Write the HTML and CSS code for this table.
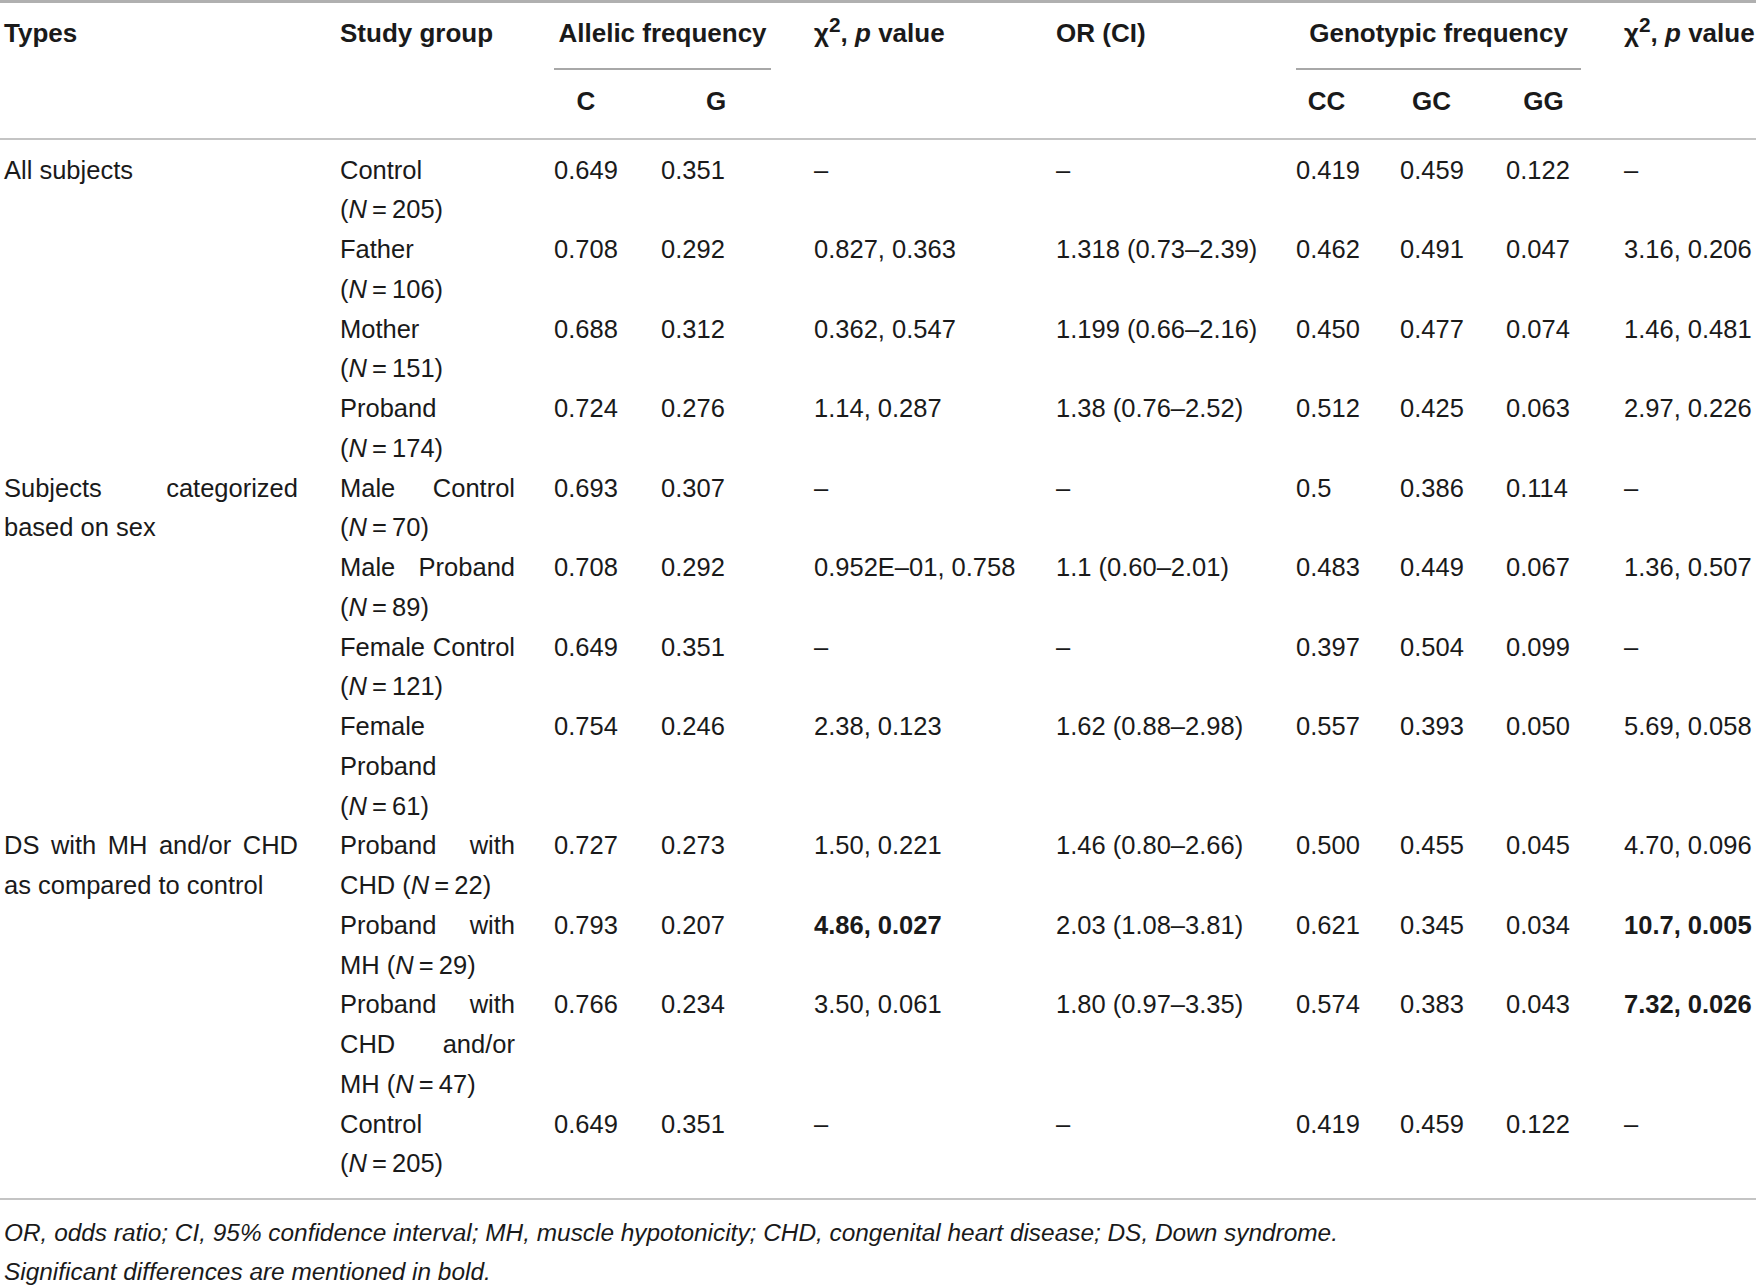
FILE: index.html
```html
<!DOCTYPE html>
<html>
<head>
<meta charset="utf-8">
<link rel="stylesheet" href="styles.css">
</head>
<body>
<div class="wrap">
<table class="tbl">
  <colgroup>
    <col class="c1"><col class="c2"><col class="c3"><col class="c4"><col class="c5"><col class="c6"><col class="c7"><col class="c8"><col class="c9"><col class="c10">
  </colgroup>
  <thead>
    <tr class="h1">
      <th rowspan="2" class="first">Types</th>
      <th rowspan="2">Study group</th>
      <th colspan="2" class="span"><div class="spanline">Allelic frequency</div></th>
      <th rowspan="2">χ<sup>2</sup>, <i>p</i> value</th>
      <th rowspan="2">OR (CI)</th>
      <th colspan="3" class="span"><div class="spanline">Genotypic frequency</div></th>
      <th rowspan="2">χ<sup>2</sup>, <i>p</i> value</th>
    </tr>
    <tr class="h2">
      <th class="ctr">C</th>
      <th class="ctr">G</th>
      <th class="ctr">CC</th>
      <th class="ctr">GC</th>
      <th class="ctr">GG</th>
    </tr>
  </thead>
  <tbody>
    <tr class="r-first">
      <td class="first" rowspan="4">All subjects</td>
      <td class="sg">Control <span class="n">(<i>N</i>&#8239;=&#8239;205)</span></td>
      <td>0.649</td><td>0.351</td><td>–</td><td>–</td><td>0.419</td><td>0.459</td><td>0.122</td><td>–</td>
    </tr>
    <tr>
      <td class="sg">Father <span class="n">(<i>N</i>&#8239;=&#8239;106)</span></td>
      <td>0.708</td><td>0.292</td><td>0.827, 0.363</td><td>1.318 (0.73–2.39)</td><td>0.462</td><td>0.491</td><td>0.047</td><td>3.16, 0.206</td>
    </tr>
    <tr>
      <td class="sg">Mother <span class="n">(<i>N</i>&#8239;=&#8239;151)</span></td>
      <td>0.688</td><td>0.312</td><td>0.362, 0.547</td><td>1.199 (0.66–2.16)</td><td>0.450</td><td>0.477</td><td>0.074</td><td>1.46, 0.481</td>
    </tr>
    <tr>
      <td class="sg">Proband <span class="n">(<i>N</i>&#8239;=&#8239;174)</span></td>
      <td>0.724</td><td>0.276</td><td>1.14, 0.287</td><td>1.38 (0.76–2.52)</td><td>0.512</td><td>0.425</td><td>0.063</td><td>2.97, 0.226</td>
    </tr>
    <tr>
      <td class="first" rowspan="4">Subjects categorized based on sex</td>
      <td class="sg">Male Control <span class="n">(<i>N</i>&#8239;=&#8239;70)</span></td>
      <td>0.693</td><td>0.307</td><td>–</td><td>–</td><td>0.5</td><td>0.386</td><td>0.114</td><td>–</td>
    </tr>
    <tr>
      <td class="sg">Male Proband <span class="n">(<i>N</i>&#8239;=&#8239;89)</span></td>
      <td>0.708</td><td>0.292</td><td>0.952E–01, 0.758</td><td>1.1 (0.60–2.01)</td><td>0.483</td><td>0.449</td><td>0.067</td><td>1.36, 0.507</td>
    </tr>
    <tr>
      <td class="sg">Female Control <span class="n">(<i>N</i>&#8239;=&#8239;121)</span></td>
      <td>0.649</td><td>0.351</td><td>–</td><td>–</td><td>0.397</td><td>0.504</td><td>0.099</td><td>–</td>
    </tr>
    <tr>
      <td class="sg">Female Proband <span class="n">(<i>N</i>&#8239;=&#8239;61)</span></td>
      <td>0.754</td><td>0.246</td><td>2.38, 0.123</td><td>1.62 (0.88–2.98)</td><td>0.557</td><td>0.393</td><td>0.050</td><td>5.69, 0.058</td>
    </tr>
    <tr>
      <td class="first" rowspan="4">DS with MH and/or CHD as compared to control</td>
      <td class="sg">Proband with CHD <span class="n">(<i>N</i>&#8239;=&#8239;22)</span></td>
      <td>0.727</td><td>0.273</td><td>1.50, 0.221</td><td>1.46 (0.80–2.66)</td><td>0.500</td><td>0.455</td><td>0.045</td><td>4.70, 0.096</td>
    </tr>
    <tr>
      <td class="sg">Proband with MH <span class="n">(<i>N</i>&#8239;=&#8239;29)</span></td>
      <td>0.793</td><td>0.207</td><td><b>4.86, 0.027</b></td><td>2.03 (1.08–3.81)</td><td>0.621</td><td>0.345</td><td>0.034</td><td><b>10.7, 0.005</b></td>
    </tr>
    <tr>
      <td class="sg">Proband with CHD and/or MH <span class="n">(<i>N</i>&#8239;=&#8239;47)</span></td>
      <td>0.766</td><td>0.234</td><td>3.50, 0.061</td><td>1.80 (0.97–3.35)</td><td>0.574</td><td>0.383</td><td>0.043</td><td><b>7.32, 0.026</b></td>
    </tr>
    <tr class="r-last">
      <td class="sg">Control <span class="n">(<i>N</i>&#8239;=&#8239;205)</span></td>
      <td>0.649</td><td>0.351</td><td>–</td><td>–</td><td>0.419</td><td>0.459</td><td>0.122</td><td>–</td>
    </tr>
  </tbody>
</table>
<div class="notes">
  <p>OR, odds ratio; CI, 95% confidence interval; MH, muscle hypotonicity; CHD, congenital heart disease; DS, Down syndrome.</p>
  <p>Significant differences are mentioned in bold.</p>
</div>
</div>
</body>
</html>
```
FILE: styles.css
```css
html, body {
  margin: 0;
  padding: 0;
  background: #fff;
  overflow: hidden;
}

.wrap {
  width: 1756px;
  overflow: hidden;
  font-family: "Liberation Sans", Arial, sans-serif;
  font-size: 25.5px;
  line-height: 39.75px;
  color: #1a1a1a;
}

.tbl {
  border-collapse: collapse;
  table-layout: fixed;
  width: 1820px;
}

.c1 { width: 340px; }
.c2 { width: 214px; }
.c3 { width: 107px; }
.c4 { width: 153px; }
.c5 { width: 242px; }
.c6 { width: 240px; }
.c7 { width: 104px; }
.c8 { width: 106px; }
.c9 { width: 118px; }
.c10 { width: 196px; }

.tbl th,
.tbl td {
  padding: 0 39px 0 0;
  text-align: left;
  vertical-align: top;
}

.tbl th {
  padding-right: 43px;
  font-size: 26px;
  font-weight: bold;
  white-space: nowrap;
}

.tbl td {
  white-space: nowrap;
}

.tbl td.sg,
.tbl td.first {
  white-space: normal;
  text-align: justify;
}

.tbl td.first {
  padding-right: 42px;
}

.tbl .first {
  padding-left: 4px;
}

.n {
  white-space: nowrap;
}

.tbl th sup {
  font-size: 0.8em;
  line-height: 0;
  vertical-align: 0.5em;
}

.tbl thead {
  border-top: 3px solid #b0b0b0;
  border-bottom: 2px solid #c4c4c4;
}

.tbl thead tr.h1 th {
  padding-top: 11px;
}

.spanline {
  text-align: center;
  padding-bottom: 14px;
  border-bottom: 2px solid #a8a8a8;
}

.tbl thead tr.h2 th {
  padding-top: 12px;
  padding-bottom: 16px;
}

.tbl th.ctr {
  text-align: center;
}

.tbl tbody {
  border-bottom: 2px solid #c4c4c4;
}

.tbl tbody tr.r-first td {
  padding-top: 11px;
}

.tbl tbody tr.r-last td {
  padding-bottom: 14px;
}

.tbl b {
  font-weight: bold;
}

.notes {
  padding: 13px 0 0 4px;
  font-style: italic;
  font-size: 24.4px;
  line-height: 39px;
}

.notes p {
  margin: 0;
}
```
